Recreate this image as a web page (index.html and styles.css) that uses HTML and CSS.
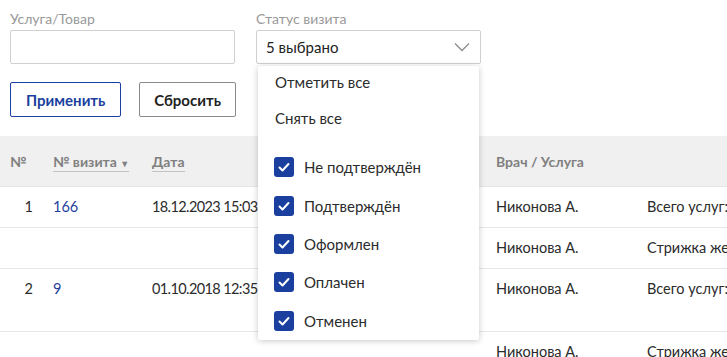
FILE: index.html
```html
<!DOCTYPE html>
<html>
<head>
	<meta charset="utf-8">
	<title>Визиты</title>
	<link rel="stylesheet" href="styles.css">
</head>
<body>

	<div class="filters">
		<div class="field">
			<label class="field-label">Услуга/Товар</label>
			<input class="text-input" type="text">
		</div>
		<div class="field">
			<label class="field-label">Статус визита</label>
			<div class="select">
				<span>5 выбрано</span>
				<svg class="chevron" width="16" height="10" viewBox="0 0 16 10"><polyline points="1,1.5 8,8.5 15,1.5" fill="none" stroke="#8c8c8c" stroke-width="1.3"/></svg>

				<div class="dropdown">
					<div class="dd-action">Отметить все</div>
					<div class="dd-action">Снять все</div>
					<div class="dd-list">
						<div class="dd-item"><span class="check"></span>Не подтверждён</div>
						<div class="dd-item"><span class="check"></span>Подтверждён</div>
						<div class="dd-item"><span class="check"></span>Оформлен</div>
						<div class="dd-item"><span class="check"></span>Оплачен</div>
						<div class="dd-item"><span class="check"></span>Отменен</div>
					</div>
				</div>
			</div>
		</div>
	</div>

	<div class="actions">
		<button class="btn btn-primary">Применить</button>
		<button class="btn">Сбросить</button>
	</div>

	<table class="visits">
		<colgroup>
			<col class="c-num"><col class="c-visit"><col class="c-date"><col class="c-doc"><col>
		</colgroup>
		<thead>
			<tr>
				<th>№</th>
				<th><span class="sortable">№ визита <small>▼</small></span></th>
				<th><span class="sortable">Дата</span></th>
				<th>Врач / Услуга</th>
				<th></th>
			</tr>
		</thead>
		<tbody>
			<tr>
				<td class="num">1</td>
				<td><a href="#">166</a></td>
				<td class="date">18.12.2023 15:03</td>
				<td>Никонова А.</td>
				<td>Всего услуг: 1</td>
			</tr>
			<tr>
				<td></td><td></td><td></td>
				<td>Никонова А.</td>
				<td>Стрижка женская</td>
			</tr>
			<tr class="tall">
				<td class="num">2</td>
				<td><a href="#">9</a></td>
				<td class="date">01.10.2018 12:35</td>
				<td>Никонова А.</td>
				<td>Всего услуг: 1</td>
			</tr>
			<tr>
				<td></td><td></td><td></td>
				<td>Никонова А.</td>
				<td>Стрижка женская</td>
			</tr>
		</tbody>
	</table>

</body>
</html>
```

FILE: styles.css
```css
body {
	margin: 0;
	font-family: Lato, "Open Sans", sans-serif;
	font-size: 14px;
	color: #2b2b2b;
	background: #fff;
	overflow: hidden;
}

.filters {
	display: flex;
	gap: 21px;
	padding: 10px 10px 0;
}

.field {
	width: 225px;
}

.field-label {
	display: block;
	color: #999;
	font-size: 14px;
	line-height: 17px;
	margin-bottom: 3px;
}

.text-input {
	display: block;
	box-sizing: border-box;
	width: 100%;
	height: 34px;
	border: 1px solid #d0d0d0;
	border-radius: 2px;
	margin: 0;
}

.select {
	position: relative;
	box-sizing: border-box;
	height: 34px;
	border: 1px solid #d0d0d0;
	border-radius: 2px;
	padding: 0 9px;
	display: flex;
	align-items: center;
	justify-content: space-between;
	font-size: 15px;
	color: #222;
}

.chevron {
	margin-right: 1px;
}

.dropdown {
	position: absolute;
	top: 35px;
	left: 1px;
	right: 1px;
	background: #fff;
	border-radius: 2px;
	box-shadow: 0 1px 6px rgba(0, 0, 0, 0.22);
	padding: 0;
	z-index: 5;
}

.dd-action {
	padding: 0 17px;
	line-height: 32px;
	margin-bottom: 4px;
	font-size: 15px;
	color: #2b2b2b;
}

.dd-list {
	margin-top: 14px;
}

.dd-item {
	display: flex;
	align-items: center;
	gap: 10px;
	height: 38.4px;
	padding: 0 16px;
	font-size: 15px;
	color: #2b2b2b;
}

.check {
	width: 20px;
	height: 20px;
	border-radius: 3px;
	background: #1a3f9e url("data:image/svg+xml,%3Csvg xmlns='http://www.w3.org/2000/svg' width='20' height='20'%3E%3Cpolyline points='5.5,10.5 8.5,13.5 14.5,7' fill='none' stroke='white' stroke-width='2' stroke-linecap='round' stroke-linejoin='round'/%3E%3C/svg%3E") no-repeat center;
}

.actions {
	display: flex;
	gap: 18px;
	padding: 18px 10px 0;
}

.btn {
	height: 35px;
	padding: 0 14px;
	font-family: Lato, "Open Sans", sans-serif;
	font-size: 15px;
	font-weight: bold;
	color: #222;
	background: #fff;
	border: 1px solid #8a8a8a;
	border-radius: 2px;
}

.btn-primary {
	color: #1a3f9e;
	border-color: #1a3f9e;
	padding: 0 15px;
}

.visits {
	width: 100%;
	margin-top: 19px;
	border-collapse: collapse;
	table-layout: fixed;
	white-space: nowrap;
}

.c-num { width: 43px; }
.c-visit { width: 99px; }
.c-date { width: 344px; }
.c-doc { width: 151px; }

.visits th {
	background: #f0f0f0;
	height: 50px;
	padding: 0 10px;
	text-align: left;
	font-weight: bold;
	color: #808080;
	font-size: 14px;
	vertical-align: middle;
}

.sortable {
	border-bottom: 1px solid #c4c4c4;
	padding-bottom: 1px;
}

.sortable small {
	font-size: 9px;
}

.visits td {
	padding: 10px 10px 11px;
	line-height: 19px;
	border-top: 1px solid #e6e6e6;
	vertical-align: top;
	overflow: hidden;
	font-size: 14.5px;
}

.visits td.num {
	text-align: right;
}

.visits td.date {
	letter-spacing: -0.6px;
}

.visits tr.tall td {
	height: 41px;
}

.visits a {
	color: #1f3f9c;
	text-decoration: none;
}
```
